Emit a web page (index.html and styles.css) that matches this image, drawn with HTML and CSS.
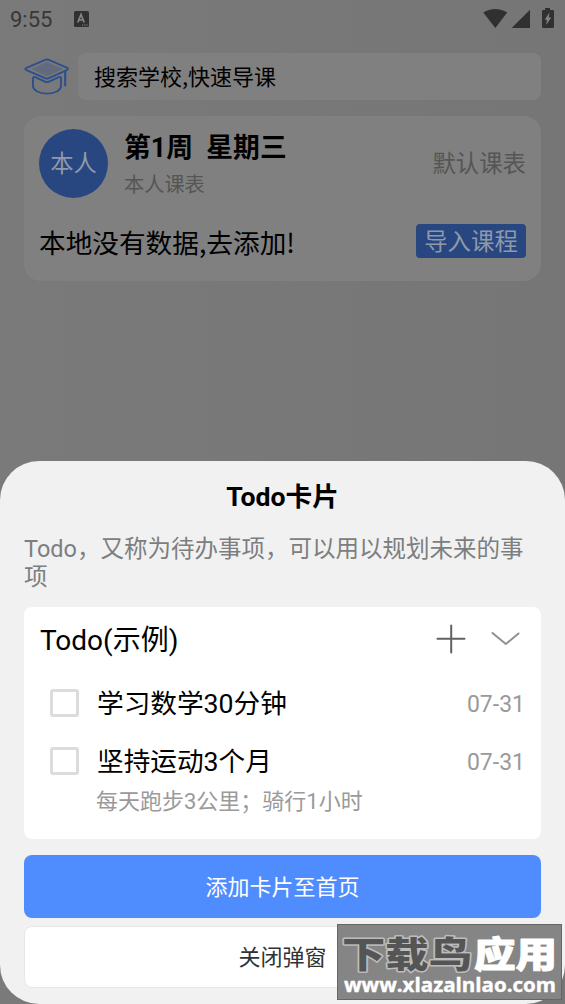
FILE: index.html
```html
<!DOCTYPE html>
<html lang="zh-CN">
<head>
<meta charset="utf-8">
<title>Todo卡片</title>
<link rel="stylesheet" href="styles.css">
</head>
<body>
<div class="screen">
  <header class="status">
    <span class="clock">9:55</span>
    <svg class="app-icon" width="15" height="16" viewBox="0 0 15 16"><rect width="15" height="16" rx="1.500" fill="#303030"/><path d="M3.800 11.500 7 3.500l3.200 8M5 9h4" fill="none" stroke="#868686" stroke-width="1.700"/><path d="M8 14h1.200M10.300 14h1.200M12.500 14h1.200" stroke="#868686" stroke-width="1"/></svg>
    <svg class="signals" width="73" height="20" viewBox="0 0 73 20" fill="#303030"><path d="M.3 4.600C7.200-.1 17.300-.1 24.200 4.600L12.300 20Z"/><path d="M28.700 20 47 1.700V20Z"/><path d="M59 3.200q0-1.200 1.200-1.200H62V0h5v2h2.800q1.200 0 1.200 1.200V18.800q0 1.200-1.200 1.200h-9.600q-1.200 0-1.200-1.200Z"/><path d="m66.500 4.500-4.800 7.200H64l-.8 5.300 5-7.500h-2.500Z" fill="#848484"/></svg>
  </header>
  <div class="search-row">
    <svg class="cap" width="46" height="38" viewBox="0 0 46 38" fill="none" stroke="#2d4f8e" stroke-width="1.900" stroke-linejoin="round" stroke-linecap="round"><path d="M7 11 23 4l16.500 7L23 18.500Z" fill="#626b7d" stroke="none"/><path d="M21.200 1.800q1.800-.7 3.600 0L42.800 9.600q2.400 1.200 0 2.500L25 20.200q-2 .9-4 0L2.500 12.200Q0 11 2.500 9.800Z"/><path d="M9 20.500q0-2.300 2-1.400l10 4.600q2 .9 4 0l10-4.600q2-.9 2 1.400V28c0 4-5.500 7.600-14 7.600S9 32 9 28Z"/><path d="M41.200 13.500V27.500" stroke-width="2.100"/></svg>
    <div class="search">搜索学校,快速导课</div>
  </div>
  <section class="course">
    <div class="person">
      <div class="avatar">本人</div>
      <div class="info"><div class="week">第1周&nbsp; 星期三</div><div class="owner">本人课表</div></div>
      <div class="default">默认课表</div>
    </div>
    <div class="empty"><span>本地没有数据,去添加!</span><button class="import">导入课程</button></div>
  </section>
</div>
<main class="sheet">
  <h1 class="title">Todo卡片</h1>
  <p class="desc">Todo，又称为待办事项，可以用以规划未来的事项</p>
  <section class="todo">
    <div class="todo-head">
      <span>Todo(示例)</span>
      <svg width="85" height="30" viewBox="0 0 85 30" fill="none" stroke-linecap="round"><path d="M1.500 14.800H28.500M15.200 1.500V28.500" stroke="#626262" stroke-width="2"/><path d="m56.500 9 13.300 11 12.700-10.500" stroke="#919191" stroke-width="2" stroke-linejoin="round"/></svg>
    </div>
    <div class="item"><i class="box"></i><span class="task">学习数学30分钟</span><time class="date">07-31</time></div>
    <div class="item"><i class="box"></i><span class="task">坚持运动3个月</span><time class="date">07-31</time></div>
    <div class="note">每天跑步3公里；骑行1小时</div>
  </section>
  <button class="add">添加卡片至首页</button>
  <button class="close">关闭弹窗</button>
</main>
<div class="stamp">
  <svg class="stamp-name" width="223" height="48" viewBox="0 0 223 48"><text class="dark" x="4" y="43" textLength="130" lengthAdjust="spacingAndGlyphs">下载鸟</text><text class="light" x="136" y="43" textLength="83" lengthAdjust="spacingAndGlyphs">应用</text></svg>
  <svg class="stamp-url" width="223" height="26" viewBox="0 0 223 26"><text x="6" y="19" textLength="212" lengthAdjust="spacingAndGlyphs">www.xlazalnlao.com</text></svg>
</div>
</body>
</html>
```
FILE: styles.css
```css
* { box-sizing: border-box; }
body { margin: 0; width: 565px; height: 1004px; overflow: hidden; position: relative; background: #797979; color: #000; font-family: Roboto, "Noto Sans CJK SC", sans-serif; }
button { border: 0; padding: 0; font-family: inherit; }
svg { display: block; flex: none; overflow: visible; }
.screen { height: 1004px; background: linear-gradient(90deg, #7a7a7a, #767676); }
.status { height: 53px; display: flex; align-items: flex-start; padding: 8px 9px 0 10px; }
.clock { font-size: 22px; line-height: 24px; color: #383838; width: 64px; }
.app-icon { margin-top: 3px; }
.signals { margin-left: auto; }
.search-row { display: flex; padding: 0 24px; gap: 8px; height: 47px; }
.cap { margin-top: 5px; }
.search { flex: 1; border-radius: 8px; background: #808080; padding-left: 16px; font-family: "Noto Sans CJK SC", sans-serif; font-size: 22px; line-height: 45px; }
.course { margin: 16px 24px 0; height: 165px; border-radius: 17px; background: #808080; padding: 13px 15px 0; }
.person { display: flex; height: 70px; }
.avatar { width: 69px; height: 69px; border-radius: 50%; background: #284781; color: #8f99aa; text-align: center; font-size: 23.3px; line-height: 70px; }
.info { margin-left: 16px; }
.week { font-size: 26.8px; line-height: 38px; font-weight: 700; white-space: nowrap; }
.owner { font-size: 20.2px; line-height: 36px; color: #555; }
.default { margin-left: auto; font-size: 23.4px; line-height: 70px; color: #555; }
.empty { display: flex; justify-content: space-between; margin-top: 25px; font-family: "Noto Sans CJK SC", sans-serif; font-size: 26.67px; line-height: 35px; }
.import { width: 110px; height: 34px; background: #284781; border-radius: 4px; color: #8f99aa; font-size: 23.4px; line-height: 30px; padding-bottom: 2px; }
.sheet { position: absolute; left: 0; top: 461px; width: 565px; height: 543px; border-radius: 39px; background: #f1f1f1; padding: 16px 24px 0; display: flex; flex-direction: column; }
.title { margin: 0; text-align: center; font-size: 26.67px; line-height: 41px; height: 40px; font-weight: 700; }
.desc { margin: 18px 0 0; font-size: 23.5px; line-height: 28px; height: 56px; color: #7c7e80; }
.todo { margin-top: 16px; height: 232px; flex: none; background: #fff; border-radius: 8px; padding: 0 16px; }
.todo-head { height: 67px; display: flex; align-items: center; justify-content: space-between; font-size: 28px; padding-right: 4px; }
.todo-head span { padding-bottom: 6px; }
.todo-head svg { margin-top: -4px; }
.item { height: 58px; display: flex; align-items: center; padding-left: 10px; }
.box { width: 29px; height: 28px; border: 3px solid #dcdcdc; border-radius: 3px; }
.task { margin-left: 18px; padding-bottom: 4px; font-size: 26.67px; }
.date { margin-left: auto; padding-top: 2px; color: #9a9a9a; font-size: 23px; }
.note { padding-left: 56px; margin-top: -4px; color: #9a9a9a; font-size: 22px; line-height: 32px; }
.add, .close { width: 100%; border-radius: 8px; font-size: 22px; flex: none; padding-bottom: 4px; }
.add { height: 63px; margin-top: 16px; background: #4f8dff; color: #fff; }
.close { height: 62px; margin-top: 8px; background: #fff; border: 1px solid #e7e7e7; color: #303335; }
.stamp { position: absolute; left: 337px; top: 924px; width: 225px; height: 76px; background: #858585; border: 1px solid #666; }
.stamp-name { font-family: "Noto Sans CJK SC", sans-serif; font-weight: 900; font-size: 36px; line-height: 1; paint-order: stroke; stroke-linejoin: round; }
.dark { fill: #555; stroke: #bcbcbc; stroke-width: 3px; }
.light { fill: #fff; stroke: #fff; stroke-width: 1px; }
.stamp-url { font-family: "Open Sans", "Noto Sans", sans-serif; font-weight: 700; font-size: 19px; fill: #fff; stroke: #fff; stroke-width: .4px; }
```
